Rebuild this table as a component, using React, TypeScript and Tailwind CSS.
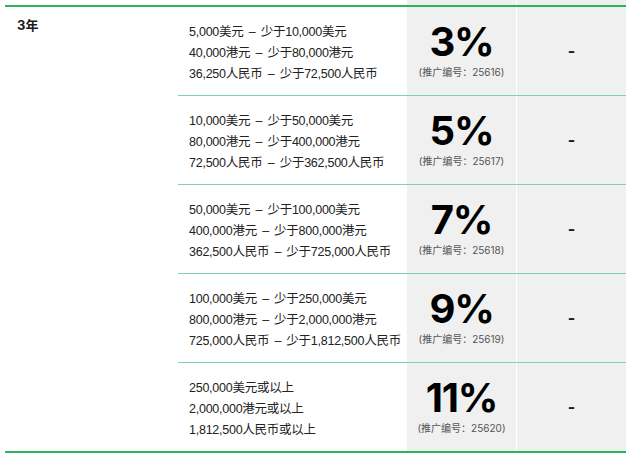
import { Fragment } from 'react';

const tiers = [
  {
    lines: ['5,000美元 – 少于10,000美元', '40,000港元 – 少于80,000港元', '36,250人民币 – 少于72,500人民币'],
    rate: '3%',
    code: '25616',
  },
  {
    lines: ['10,000美元 – 少于50,000美元', '80,000港元 – 少于400,000港元', '72,500人民币 – 少于362,500人民币'],
    rate: '5%',
    code: '25617',
  },
  {
    lines: ['50,000美元 – 少于100,000美元', '400,000港元 – 少于800,000港元', '362,500人民币 – 少于725,000人民币'],
    rate: '7%',
    code: '25618',
  },
  {
    lines: ['100,000美元 – 少于250,000美元', '800,000港元 – 少于2,000,000港元', '725,000人民币 – 少于1,812,500人民币'],
    rate: '9%',
    code: '25619',
  },
  {
    lines: ['250,000美元或以上', '2,000,000港元或以上', '1,812,500人民币或以上'],
    rate: '11%',
    code: '25620',
  },
];

export default function App() {
  return (
    <div
      className="w-[631px] h-[460px] bg-white text-[#1a1a1a] pl-[5px]"
      style={{ fontFamily: 'Inter, "Noto Sans CJK SC", sans-serif' }}
    >
      {/* strip of the row above, cropped */}
      <div className="flex h-[5px]">
        <div className="w-[402px]" />
        <div className="w-[109px] bg-[#eff0ef]" />
        <div className="w-px" />
        <div className="w-[109px] bg-[#eff0ef]" />
      </div>

      <div className="flex w-[621px] border-t-2 border-b-2 border-[#2db35d]">
        <div className="w-[173px] pl-3 pt-[8px] text-[13px] font-bold leading-5">3年</div>

        <div className="flex flex-col">
          {tiers.map((t, i) => (
            <Fragment key={t.code}>
              {i > 0 && <div className="h-px bg-[#7dd4a6]" />}
              <div className="flex h-[88px]">
                <div className="w-[229px] flex flex-col justify-center pl-[11px] pt-1 text-[12.5px] leading-[21px] tracking-[-0.02em] [word-spacing:2px] font-['Liberation_Sans','Noto_Sans_CJK_SC',sans-serif] text-[#222]">
                  {t.lines.map((l) => (
                    <div key={l} className="whitespace-nowrap">{l}</div>
                  ))}
                </div>
                <div className="w-[109px] bg-[#eff0ef] flex flex-col items-center justify-center pb-[2px]">
                  <div className="text-[40px] font-bold leading-[38px] tracking-[-0.03em] text-black">{t.rate}</div>
                  <div className="text-[10px] leading-3 text-[#555] mt-[5px] whitespace-nowrap">
                    (推广编号：{t.code})
                  </div>
                </div>
                <div className="w-px bg-white" />
                <div className="w-[109px] bg-[#eff0ef] flex items-center justify-center text-[16px] font-bold">
                  -
                </div>
              </div>
            </Fragment>
          ))}
        </div>
      </div>
    </div>
  );
}
